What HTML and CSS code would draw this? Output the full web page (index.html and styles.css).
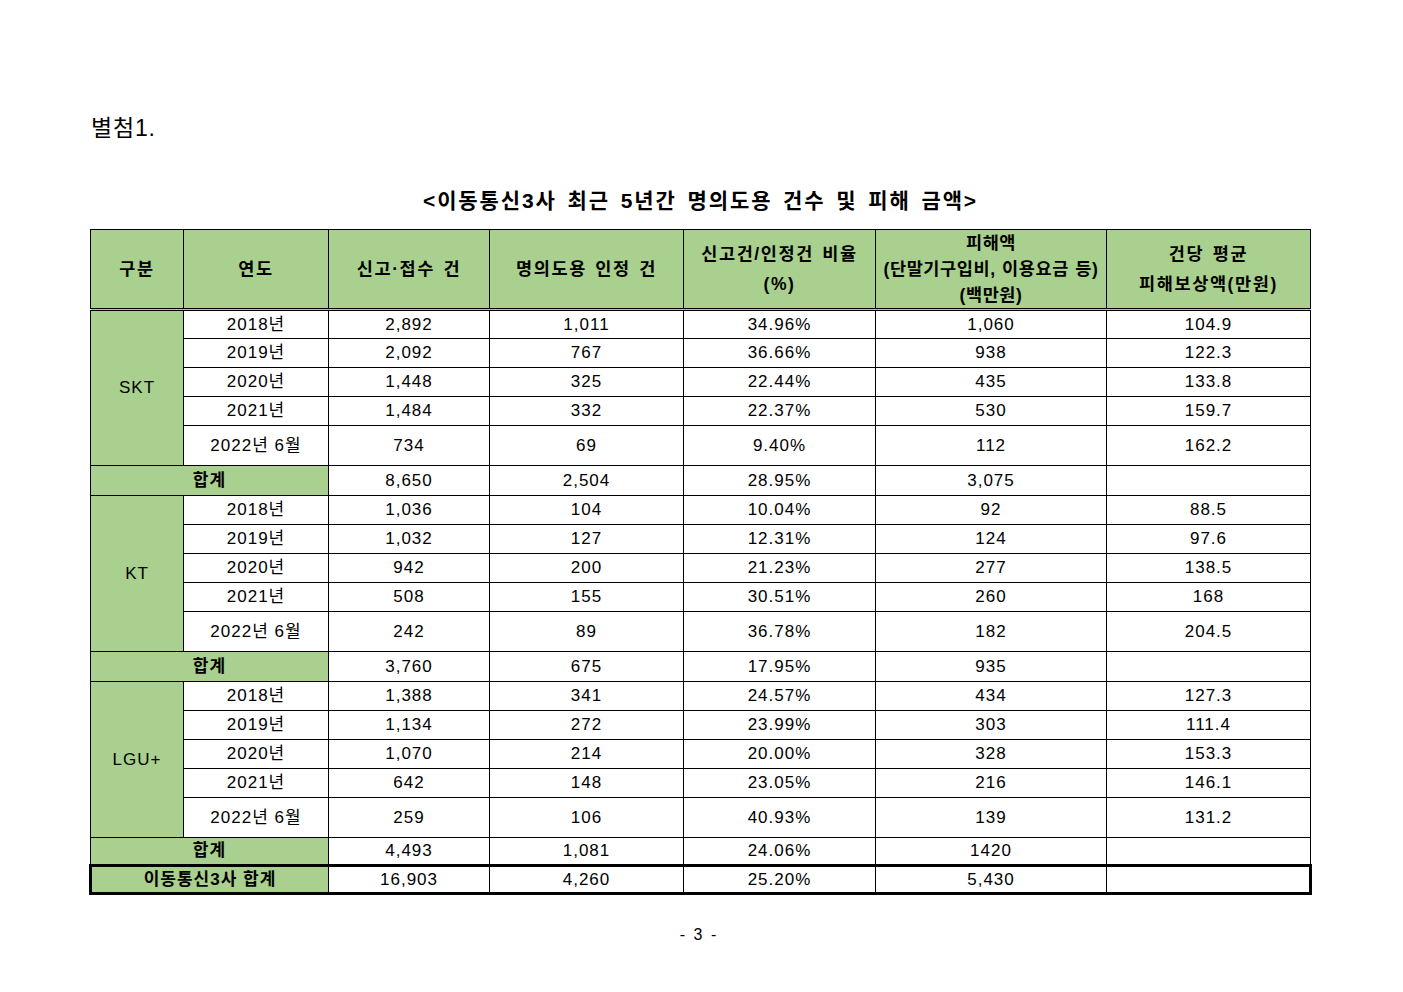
FILE: index.html
```html
<!DOCTYPE html>
<html lang="ko">
<head>
<meta charset="utf-8">
<title>별첨1</title>
<link rel="stylesheet" href="styles.css">
</head>
<body>
<div class="page">
  <div class="attach">별첨1.</div>
  <div class="title">&lt;이동통신3사 최근 5년간 명의도용 건수 및 피해 금액&gt;</div>
  <table class="data">
    <colgroup>
      <col class="c1"><col class="c2"><col class="c3"><col class="c4"><col class="c5"><col class="c6"><col class="c7">
    </colgroup>
    <thead>
      <tr class="head">
        <th>구분</th>
        <th>연도</th>
        <th>신고·접수 건</th>
        <th>명의도용 인정 건</th>
        <th class="two">신고건/인정건 비율<br>(%)</th>
        <th class="three">피해액<br>(단말기구입비, 이용요금 등)<br>(백만원)</th>
        <th class="two">건당 평균<br>피해보상액(만원)</th>
      </tr>
    </thead>
    <tbody>
      <tr><td class="grp" rowspan="5">SKT</td><td>2018년</td><td>2,892</td><td>1,011</td><td>34.96%</td><td>1,060</td><td>104.9</td></tr>
      <tr><td>2019년</td><td>2,092</td><td>767</td><td>36.66%</td><td>938</td><td>122.3</td></tr>
      <tr><td>2020년</td><td>1,448</td><td>325</td><td>22.44%</td><td>435</td><td>133.8</td></tr>
      <tr><td>2021년</td><td>1,484</td><td>332</td><td>22.37%</td><td>530</td><td>159.7</td></tr>
      <tr class="tall"><td>2022년 6월</td><td>734</td><td>69</td><td>9.40%</td><td>112</td><td>162.2</td></tr>
      <tr class="sumrow"><td class="sum" colspan="2">합계</td><td>8,650</td><td>2,504</td><td>28.95%</td><td>3,075</td><td></td></tr>

      <tr><td class="grp" rowspan="5">KT</td><td>2018년</td><td>1,036</td><td>104</td><td>10.04%</td><td>92</td><td>88.5</td></tr>
      <tr><td>2019년</td><td>1,032</td><td>127</td><td>12.31%</td><td>124</td><td>97.6</td></tr>
      <tr><td>2020년</td><td>942</td><td>200</td><td>21.23%</td><td>277</td><td>138.5</td></tr>
      <tr><td>2021년</td><td>508</td><td>155</td><td>30.51%</td><td>260</td><td>168</td></tr>
      <tr class="tall"><td>2022년 6월</td><td>242</td><td>89</td><td>36.78%</td><td>182</td><td>204.5</td></tr>
      <tr class="sumrow"><td class="sum" colspan="2">합계</td><td>3,760</td><td>675</td><td>17.95%</td><td>935</td><td></td></tr>

      <tr><td class="grp" rowspan="5">LGU+</td><td>2018년</td><td>1,388</td><td>341</td><td>24.57%</td><td>434</td><td>127.3</td></tr>
      <tr><td>2019년</td><td>1,134</td><td>272</td><td>23.99%</td><td>303</td><td>111.4</td></tr>
      <tr><td>2020년</td><td>1,070</td><td>214</td><td>20.00%</td><td>328</td><td>153.3</td></tr>
      <tr><td>2021년</td><td>642</td><td>148</td><td>23.05%</td><td>216</td><td>146.1</td></tr>
      <tr class="tall"><td>2022년 6월</td><td>259</td><td>106</td><td>40.93%</td><td>139</td><td>131.2</td></tr>
      <tr class="short"><td class="sum" colspan="2">합계</td><td>4,493</td><td>1,081</td><td>24.06%</td><td>1420</td><td></td></tr>

      <tr class="total"><td class="sum" colspan="2">이동통신3사 합계</td><td>16,903</td><td>4,260</td><td>25.20%</td><td>5,430</td><td></td></tr>
    </tbody>
  </table>
  <div class="pageno">- 3 -</div>
</div>
</body>
</html>
```

FILE: styles.css
```css
html, body {
  margin: 0;
  padding: 0;
  background: #ffffff;
}

body {
  font-family: "Liberation Sans", "Noto Sans CJK KR", sans-serif;
  color: #000000;
}

.page {
  width: 1220px;
  padding: 113px 0 0 89px;
}

.attach {
  font-size: 23px;
  line-height: 30px;
  margin-left: 2px;
  letter-spacing: 0.8px;
}

.title {
  margin-top: 43px;
  text-align: center;
  font-size: 21px;
  line-height: 30px;
  font-weight: bold;
  letter-spacing: 1.9px;
  word-spacing: 3px;
  padding-left: 3px;
}

.data {
  margin-top: 13px;
  width: 1220px;
  border-collapse: collapse;
  table-layout: fixed;
  font-size: 17px;
  letter-spacing: 1px;
}

.c1 { width: 93px; }
.c2 { width: 145px; }
.c3 { width: 161px; }
.c4 { width: 194px; }
.c5 { width: 192px; }
.c6 { width: 231px; }
.c7 { width: 204px; }

.data th,
.data td {
  border: 1px solid #000000;
  padding: 0;
  text-align: center;
  vertical-align: middle;
  line-height: 20px;
}

.data th {
  background: #a9d08e;
  font-weight: bold;
  font-size: 17.5px;
  letter-spacing: 1.6px;
  word-spacing: 2px;
  border-bottom: 3px double #000000;
}

.data th.two { line-height: 30px; }
.data th.three { line-height: 26px; letter-spacing: 0.6px; word-spacing: 1px; }

.data tr { height: 29px; }
.data tr.head { height: 79px; }
.data tr.tall { height: 40px; }
.data tr.sumrow { height: 30px; }
.data tr.short { height: 28px; }
.data tr.total { height: 28px; }

.data td.grp,
.data td.sum {
  background: #a9d08e;
}

.data td.sum {
  font-weight: bold;
}

.data tr.total td {
  border-top: 3px solid #000000;
  border-bottom: 3px solid #000000;
}

.data tr.total td:first-child {
  border-left: 3px solid #000000;
}

.data tr.total td:last-child {
  border-right: 3px solid #000000;
}

.pageno {
  margin-top: 28px;
  text-align: center;
  font-size: 16px;
  line-height: 24px;
  letter-spacing: 2px;
}
```
